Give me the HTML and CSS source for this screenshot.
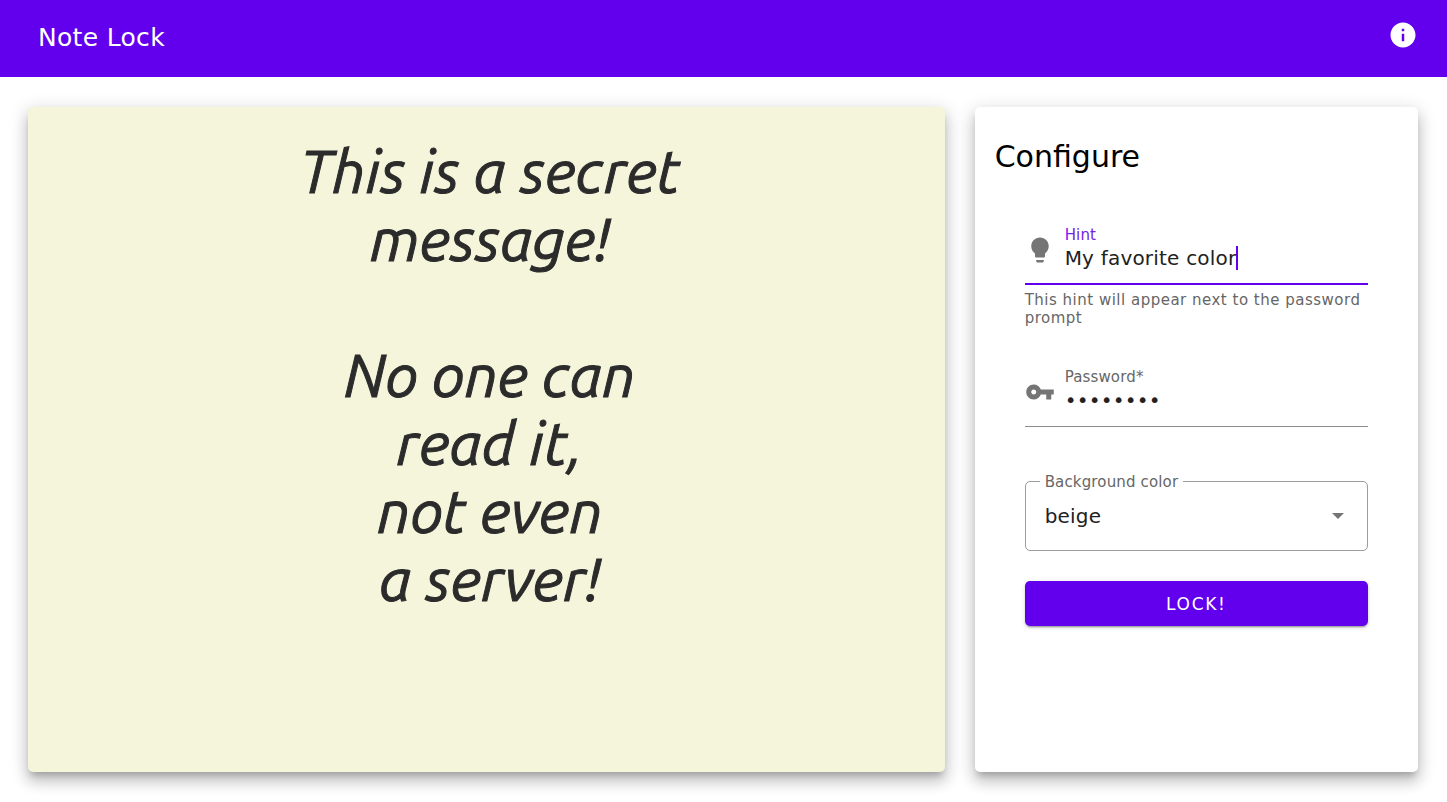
FILE: index.html
```html
<!DOCTYPE html>
<html lang="en">
<head>
  <meta charset="utf-8">
  <meta name="viewport" content="width=device-width, initial-scale=1">
  <title>Note Lock</title>
  <link rel="stylesheet" href="styles.css">
</head>
<body>
  <header class="app-bar">
    <h1 class="app-title">Note Lock</h1>
    <button class="info-button" type="button" aria-label="About">
      <svg class="icon" viewBox="0 0 24 24" aria-hidden="true"><path d="M12 2C6.48 2 2 6.48 2 12s4.48 10 10 10 10-4.48 10-10S17.52 2 12 2zm1 15h-2v-6h2v6zm0-8h-2V7h2v2z"/></svg>
    </button>
  </header>

  <main class="layout">
    <section class="card note">
      <textarea class="note-text" aria-label="Note" spellcheck="false">This is a secret
message!

No one can
read it,
not even
a server!</textarea>
    </section>

    <form class="card panel">
      <h2 class="panel-title">Configure</h2>
      <div class="fields">
        <div class="field-group">
          <div class="text-field text-field-active">
            <svg class="icon" viewBox="0 0 24 24" aria-hidden="true"><path d="M9 21c0 .5.4 1 1 1h4c.6 0 1-.5 1-1v-1H9v1zm3-19C8.100 2 5 5.100 5 9c0 2.400 1.200 4.500 3 5.700V17c0 .5.4 1 1 1h6c.6 0 1-.5 1-1v-2.300c1.800-1.300 3-3.400 3-5.700 0-3.900-3.100-7-7-7z"/></svg>
            <div class="field-body">
              <label class="field-label" for="hint">Hint</label>
              <div class="field-line">
                <input class="field-input field-input-fit" id="hint" type="text" value="My favorite color" aria-describedby="hint-help">
                <span class="caret"></span>
              </div>
            </div>
          </div>
          <p class="helper" id="hint-help">This hint will appear next to the password prompt</p>
        </div>

        <div class="text-field">
          <svg class="icon" viewBox="0 0 24 24" aria-hidden="true"><path d="M12.650 10C11.830 7.670 9.610 6 7 6c-3.310 0-6 2.690-6 6s2.690 6 6 6c2.610 0 4.830-1.670 5.650-4H17v4h4v-4h2v-4H12.650zM7 14c-1.100 0-2-.9-2-2s.9-2 2-2 2 .9 2 2-.9 2-2 2z"/></svg>
          <div class="field-body">
            <label class="field-label" for="password">Password*</label>
            <div class="field-line">
              <input class="field-input" id="password" type="password" value="bluebird" required>
            </div>
          </div>
        </div>

        <div class="select-field">
          <label class="select-label" for="background">Background color</label>
          <select class="select-input" id="background">
            <option selected>beige</option>
            <option>white</option>
            <option>lightblue</option>
          </select>
          <svg class="select-arrow" viewBox="0 0 12 6" aria-hidden="true"><path d="M0 0h12L6 6z"/></svg>
        </div>

        <button class="lock-button" type="button">LOCK!</button>
      </div>
    </form>
  </main>
</body>
</html>
```
FILE: styles.css
```css
* {
  box-sizing: border-box;
}

body {
  display: flex;
  flex-direction: column;
  min-height: 100vh;
  margin: 0;
  background: #fff;
  font-family: "DejaVu Sans", sans-serif;
}

.icon {
  width: 30px;
  height: 30px;
  flex: none;
  display: block;
  fill: currentColor;
}

.app-bar {
  display: flex;
  align-items: center;
  justify-content: space-between;
  padding: 15px 24px 17px 38px;
  background: #6200ee;
  color: #fff;
}

.app-title {
  margin: 0;
  font-size: 25px;
  font-weight: 400;
  line-height: 40px;
  letter-spacing: 0.0125em;
}

.info-button {
  padding: 5px;
  margin: 0 0 5px;
  border: 0;
  background: none;
  color: inherit;
}

.layout {
  flex: 1;
  display: grid;
  grid-template-columns: repeat(12, minmax(0, 1fr));
  gap: 30px;
  padding: 30px 29px 30px 28px;
}

.card {
  border-radius: 5px;
  box-shadow: 0 6px 6px -3px rgba(0, 0, 0, 0.2),
    0 10px 14px 1px rgba(0, 0, 0, 0.14),
    0 4px 18px 3px rgba(0, 0, 0, 0.12);
}

.note {
  grid-column: span 8;
  display: flex;
  padding: 30px 28px 30px 35px;
  background: #f5f5dc;
}

.note-text {
  flex: 1;
  padding: 0;
  border: 0;
  outline: 0;
  resize: none;
  background: none;
  color: #2b2b2b;
  font: italic 400 60px/68px Ubuntu, "Open Sans", sans-serif;
  text-align: center;
  -webkit-text-stroke: 1px #2b2b2b;
}

.panel {
  grid-column: span 4;
  padding: 30px 20px;
  background: #fff;
}

.panel-title {
  margin: 0;
  font-size: 30px;
  font-weight: 400;
  line-height: 40px;
}

.fields {
  display: flex;
  flex-direction: column;
  gap: 30px;
  padding: 38px 30px;
}

.text-field {
  display: flex;
  align-items: center;
  gap: 10px;
  height: 70px;
  border-bottom: 1px solid #8c8c8c;
  color: #757575;
}

.text-field-active {
  border-bottom-color: #6200ee;
  box-shadow: inset 0 -1px #6200ee;
}

.field-body {
  flex: 1;
  min-width: 0;
}

.field-label {
  display: block;
  color: #666;
  font-size: 15px;
  line-height: 18px;
  letter-spacing: 0.01em;
}

.text-field-active .field-label {
  color: #7322e4;
}

.field-line {
  display: flex;
  align-items: center;
  height: 28px;
  margin-bottom: 2px;
}

.field-input {
  width: 100%;
  padding: 0;
  border: 0;
  outline: 0;
  background: none;
  color: #212121;
  font: 20px/24px "DejaVu Sans", sans-serif;
  letter-spacing: 0.01em;
}

.field-input-fit {
  width: auto;
  max-width: 100%;
  field-sizing: content;
}

.caret {
  width: 2px;
  height: 24px;
  flex: none;
  background: #6200ee;
}

.helper {
  margin: 0;
  padding-top: 6px;
  color: #666;
  font-size: 15px;
  line-height: 18px;
  letter-spacing: 0.0333em;
}

.select-field {
  position: relative;
  margin-top: 24px;
}

.select-label {
  position: absolute;
  top: -8px;
  left: 15px;
  padding: 0 5px;
  background: #fff;
  color: #666;
  font-size: 15px;
  line-height: 18px;
  letter-spacing: 0.01em;
}

.select-input {
  display: block;
  width: 100%;
  height: 70px;
  padding: 0 48px 0 19px;
  border: 1px solid #9e9e9e;
  border-radius: 5px;
  appearance: none;
  background: #fff;
  color: #212121;
  font: 20px/24px "DejaVu Sans", sans-serif;
  letter-spacing: 0.01em;
}

.select-arrow {
  position: absolute;
  top: 32px;
  right: 24px;
  width: 12px;
  height: 6px;
  fill: #757575;
  pointer-events: none;
}

.lock-button {
  height: 45px;
  padding: 0 20px;
  border: 0;
  border-radius: 5px;
  background: #6200ee;
  box-shadow: 0 3px 1px -2px rgba(0, 0, 0, 0.2),
    0 2px 2px 0 rgba(0, 0, 0, 0.14),
    0 1px 5px 0 rgba(0, 0, 0, 0.12);
  color: #fff;
  font: 17px/24px "DejaVu Sans", sans-serif;
  letter-spacing: 0.1em;
}
```
